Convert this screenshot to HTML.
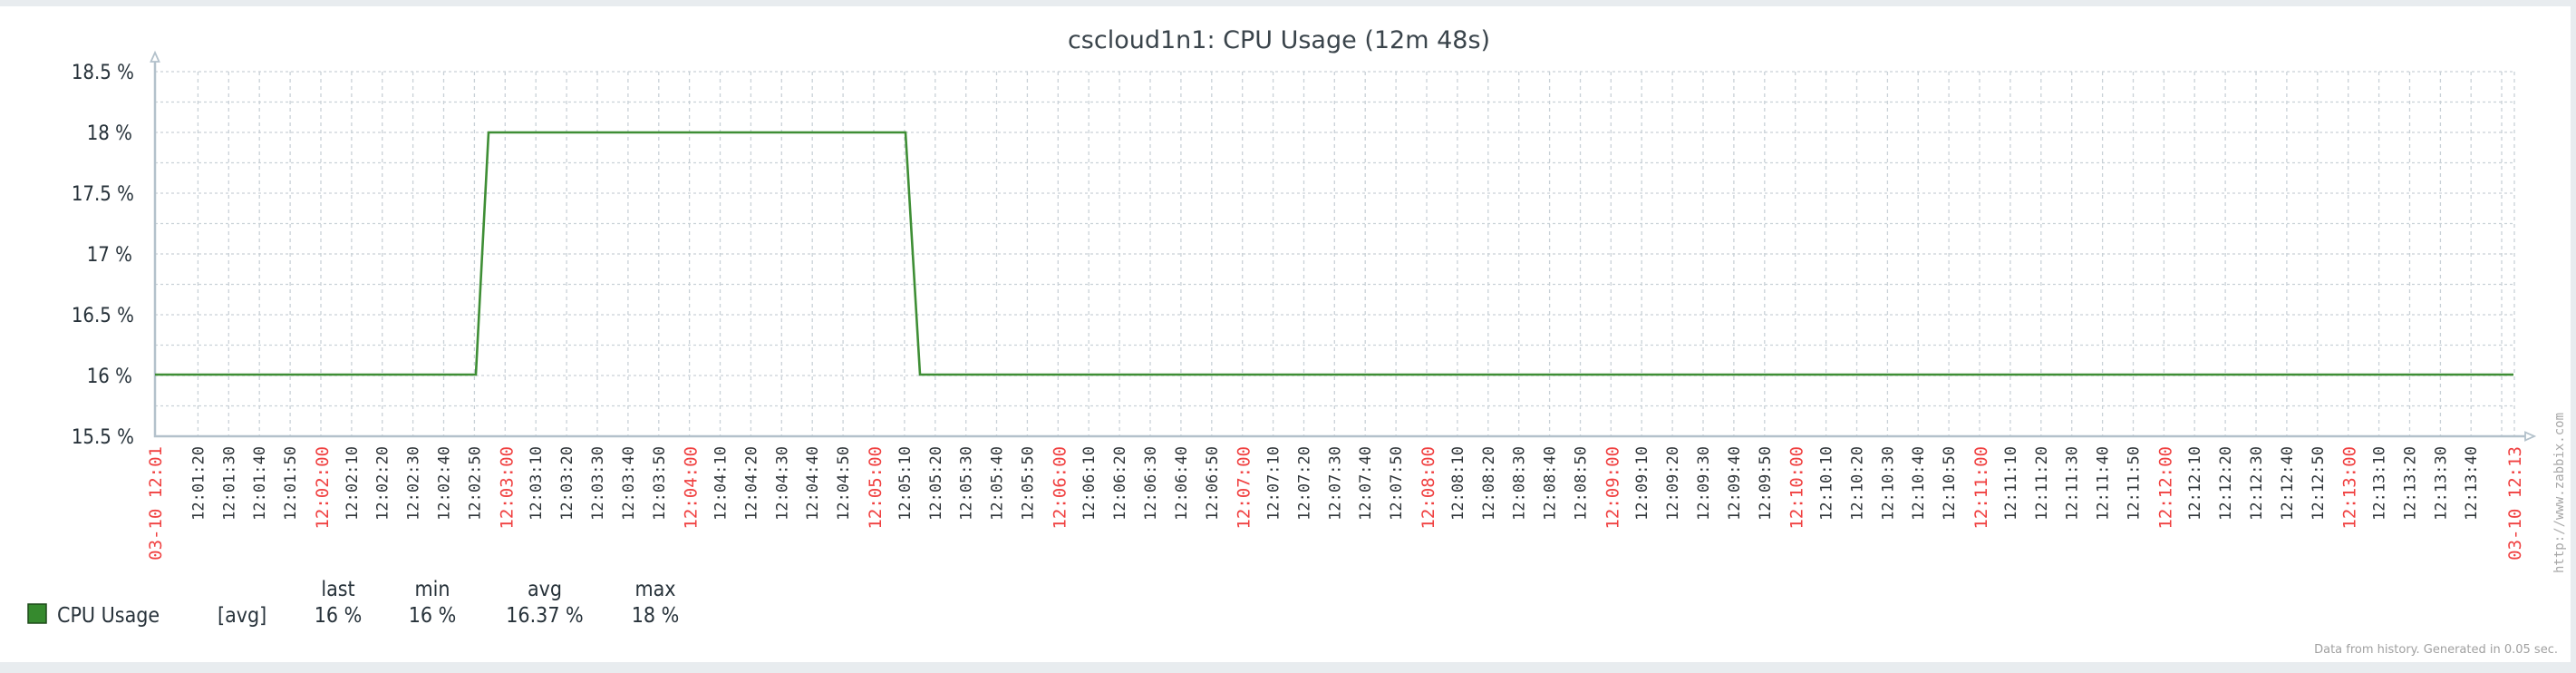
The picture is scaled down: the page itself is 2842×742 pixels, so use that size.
<!DOCTYPE html>
<html><head><meta charset="utf-8"><style>
html,body{margin:0;padding:0;background:#fff;}
body{width:2842px;height:742px;overflow:hidden;position:relative;}
svg{position:absolute;left:0;top:0;}
.yl{font-family:"DejaVu Sans Condensed","DejaVu Sans","Liberation Sans",sans-serif;font-size:22px;fill:#27323a;text-anchor:end;}
.xl{font-family:"DejaVu Sans Mono","Liberation Mono",monospace;font-size:17px;fill:#30363a;text-anchor:end;}
.xr{font-family:"DejaVu Sans Mono","Liberation Mono",monospace;font-size:19px;fill:#f04040;text-anchor:end;}
.lg{font-family:"DejaVu Sans Condensed","DejaVu Sans","Liberation Sans",sans-serif;font-size:23px;fill:#27323a;}
</style></head><body>
<svg width="2842" height="742" viewBox="0 0 2842 742">
<rect x="0" y="0" width="2842" height="7" fill="#e8ecef"/>
<rect x="2836" y="0" width="6" height="742" fill="#e8ecef"/>
<rect x="0" y="730" width="2842" height="12" fill="#e8ecef"/>
<text x="1411" y="53" text-anchor="middle" font-family="'DejaVu Sans','Liberation Sans',sans-serif" font-size="27" fill="#3a444b">cscloud1n1: CPU Usage (12m 48s)</text>
<g stroke="#c9d1d7" stroke-width="1.3" stroke-dasharray="3,3">
<path d="M171 79H2774M171 112.5H2774M171 146H2774M171 179.5H2774M171 213H2774M171 246.5H2774M171 280H2774M171 313.5H2774M171 347H2774M171 380.5H2774M171 414H2774M171 447.5H2774"/>
</g>
<g stroke="#c9d1d7" stroke-width="1.3" stroke-dasharray="4,4">
<path d="M218.4 79V481M252.3 79V481M286.2 79V481M320.1 79V481M354 79V481M387.9 79V481M421.7 79V481M455.6 79V481M489.5 79V481M523.4 79V481M557.3 79V481M591.2 79V481M625.1 79V481M659 79V481M692.9 79V481M726.8 79V481M760.6 79V481M794.5 79V481M828.4 79V481M862.3 79V481M896.2 79V481M930.1 79V481M964 79V481M997.9 79V481M1031.8 79V481M1065.7 79V481M1099.5 79V481M1133.4 79V481M1167.3 79V481M1201.2 79V481M1235.1 79V481M1269 79V481M1302.9 79V481M1336.8 79V481M1370.7 79V481M1404.6 79V481M1438.5 79V481M1472.3 79V481M1506.2 79V481M1540.1 79V481M1574 79V481M1607.9 79V481M1641.8 79V481M1675.7 79V481M1709.6 79V481M1743.5 79V481M1777.3 79V481M1811.2 79V481M1845.1 79V481M1879 79V481M1912.9 79V481M1946.8 79V481M1980.7 79V481M2014.6 79V481M2048.5 79V481M2082.4 79V481M2116.2 79V481M2150.1 79V481M2184 79V481M2217.9 79V481M2251.8 79V481M2285.7 79V481M2319.6 79V481M2353.5 79V481M2387.4 79V481M2421.2 79V481M2455.1 79V481M2489 79V481M2522.9 79V481M2556.8 79V481M2590.7 79V481M2624.6 79V481M2658.5 79V481M2692.4 79V481M2726.2 79V481M2760 79V481M2774 79V481"/>
</g>
<g stroke="#b3c1cb" stroke-width="2.5" fill="none">
<path d="M171 68V481H2786"/>
<path d="M171 58L166.5 68H175.5Z" fill="#fff" stroke-width="1.8"/>
<path d="M2796 481L2786 476.5V485.5Z" fill="#fff" stroke-width="1.8"/>
</g>
<path d="M171 413H525L539 146H999L1015 413H2773" fill="none" stroke="#3e8e35" stroke-width="2.6"/>
<text class="yl" x="148" y="87">18.5 %</text>
<text class="yl" x="146" y="154">18 %</text>
<text class="yl" x="148" y="221">17.5 %</text>
<text class="yl" x="146" y="288">17 %</text>
<text class="yl" x="148" y="355">16.5 %</text>
<text class="yl" x="146" y="422">16 %</text>
<text class="yl" x="148" y="489">15.5 %</text>
<g>
<text class="xr" transform="translate(178,492) rotate(-90)">03-10 12:01</text>
<text class="xl" transform="translate(224.4,492) rotate(-90)">12:01:20</text>
<text class="xl" transform="translate(258.3,492) rotate(-90)">12:01:30</text>
<text class="xl" transform="translate(292.2,492) rotate(-90)">12:01:40</text>
<text class="xl" transform="translate(326.1,492) rotate(-90)">12:01:50</text>
<text class="xr" transform="translate(362,492) rotate(-90)">12:02:00</text>
<text class="xl" transform="translate(393.9,492) rotate(-90)">12:02:10</text>
<text class="xl" transform="translate(427.7,492) rotate(-90)">12:02:20</text>
<text class="xl" transform="translate(461.6,492) rotate(-90)">12:02:30</text>
<text class="xl" transform="translate(495.5,492) rotate(-90)">12:02:40</text>
<text class="xl" transform="translate(529.4,492) rotate(-90)">12:02:50</text>
<text class="xr" transform="translate(565.3,492) rotate(-90)">12:03:00</text>
<text class="xl" transform="translate(597.2,492) rotate(-90)">12:03:10</text>
<text class="xl" transform="translate(631.1,492) rotate(-90)">12:03:20</text>
<text class="xl" transform="translate(665,492) rotate(-90)">12:03:30</text>
<text class="xl" transform="translate(698.9,492) rotate(-90)">12:03:40</text>
<text class="xl" transform="translate(732.8,492) rotate(-90)">12:03:50</text>
<text class="xr" transform="translate(768.6,492) rotate(-90)">12:04:00</text>
<text class="xl" transform="translate(800.5,492) rotate(-90)">12:04:10</text>
<text class="xl" transform="translate(834.4,492) rotate(-90)">12:04:20</text>
<text class="xl" transform="translate(868.3,492) rotate(-90)">12:04:30</text>
<text class="xl" transform="translate(902.2,492) rotate(-90)">12:04:40</text>
<text class="xl" transform="translate(936.1,492) rotate(-90)">12:04:50</text>
<text class="xr" transform="translate(972,492) rotate(-90)">12:05:00</text>
<text class="xl" transform="translate(1003.9,492) rotate(-90)">12:05:10</text>
<text class="xl" transform="translate(1037.8,492) rotate(-90)">12:05:20</text>
<text class="xl" transform="translate(1071.7,492) rotate(-90)">12:05:30</text>
<text class="xl" transform="translate(1105.5,492) rotate(-90)">12:05:40</text>
<text class="xl" transform="translate(1139.4,492) rotate(-90)">12:05:50</text>
<text class="xr" transform="translate(1175.3,492) rotate(-90)">12:06:00</text>
<text class="xl" transform="translate(1207.2,492) rotate(-90)">12:06:10</text>
<text class="xl" transform="translate(1241.1,492) rotate(-90)">12:06:20</text>
<text class="xl" transform="translate(1275,492) rotate(-90)">12:06:30</text>
<text class="xl" transform="translate(1308.9,492) rotate(-90)">12:06:40</text>
<text class="xl" transform="translate(1342.8,492) rotate(-90)">12:06:50</text>
<text class="xr" transform="translate(1378.7,492) rotate(-90)">12:07:00</text>
<text class="xl" transform="translate(1410.6,492) rotate(-90)">12:07:10</text>
<text class="xl" transform="translate(1444.5,492) rotate(-90)">12:07:20</text>
<text class="xl" transform="translate(1478.3,492) rotate(-90)">12:07:30</text>
<text class="xl" transform="translate(1512.2,492) rotate(-90)">12:07:40</text>
<text class="xl" transform="translate(1546.1,492) rotate(-90)">12:07:50</text>
<text class="xr" transform="translate(1582,492) rotate(-90)">12:08:00</text>
<text class="xl" transform="translate(1613.9,492) rotate(-90)">12:08:10</text>
<text class="xl" transform="translate(1647.8,492) rotate(-90)">12:08:20</text>
<text class="xl" transform="translate(1681.7,492) rotate(-90)">12:08:30</text>
<text class="xl" transform="translate(1715.6,492) rotate(-90)">12:08:40</text>
<text class="xl" transform="translate(1749.5,492) rotate(-90)">12:08:50</text>
<text class="xr" transform="translate(1785.3,492) rotate(-90)">12:09:00</text>
<text class="xl" transform="translate(1817.2,492) rotate(-90)">12:09:10</text>
<text class="xl" transform="translate(1851.1,492) rotate(-90)">12:09:20</text>
<text class="xl" transform="translate(1885,492) rotate(-90)">12:09:30</text>
<text class="xl" transform="translate(1918.9,492) rotate(-90)">12:09:40</text>
<text class="xl" transform="translate(1952.8,492) rotate(-90)">12:09:50</text>
<text class="xr" transform="translate(1988.7,492) rotate(-90)">12:10:00</text>
<text class="xl" transform="translate(2020.6,492) rotate(-90)">12:10:10</text>
<text class="xl" transform="translate(2054.5,492) rotate(-90)">12:10:20</text>
<text class="xl" transform="translate(2088.4,492) rotate(-90)">12:10:30</text>
<text class="xl" transform="translate(2122.2,492) rotate(-90)">12:10:40</text>
<text class="xl" transform="translate(2156.1,492) rotate(-90)">12:10:50</text>
<text class="xr" transform="translate(2192,492) rotate(-90)">12:11:00</text>
<text class="xl" transform="translate(2223.9,492) rotate(-90)">12:11:10</text>
<text class="xl" transform="translate(2257.8,492) rotate(-90)">12:11:20</text>
<text class="xl" transform="translate(2291.7,492) rotate(-90)">12:11:30</text>
<text class="xl" transform="translate(2325.6,492) rotate(-90)">12:11:40</text>
<text class="xl" transform="translate(2359.5,492) rotate(-90)">12:11:50</text>
<text class="xr" transform="translate(2395.4,492) rotate(-90)">12:12:00</text>
<text class="xl" transform="translate(2427.2,492) rotate(-90)">12:12:10</text>
<text class="xl" transform="translate(2461.1,492) rotate(-90)">12:12:20</text>
<text class="xl" transform="translate(2495,492) rotate(-90)">12:12:30</text>
<text class="xl" transform="translate(2528.9,492) rotate(-90)">12:12:40</text>
<text class="xl" transform="translate(2562.8,492) rotate(-90)">12:12:50</text>
<text class="xr" transform="translate(2598.7,492) rotate(-90)">12:13:00</text>
<text class="xl" transform="translate(2630.6,492) rotate(-90)">12:13:10</text>
<text class="xl" transform="translate(2664.5,492) rotate(-90)">12:13:20</text>
<text class="xl" transform="translate(2698.4,492) rotate(-90)">12:13:30</text>
<text class="xl" transform="translate(2732.2,492) rotate(-90)">12:13:40</text>
<text class="xr" transform="translate(2781,492) rotate(-90)">03-10 12:13</text>
</g>
<text transform="translate(2828,632) rotate(-90)" font-family="'DejaVu Sans Mono','Liberation Mono',monospace" font-size="14" fill="#a8a8a8">http://www.zabbix.com</text>
<rect x="31" y="666" width="20" height="21" fill="#368a2e" stroke="#1f4a1a" stroke-width="1.5"/>
<text class="lg" x="63" y="686">CPU Usage</text>
<text class="lg" x="240" y="686">[avg]</text>
<text class="lg" x="373" y="657" text-anchor="middle">last</text>
<text class="lg" x="477" y="657" text-anchor="middle">min</text>
<text class="lg" x="601" y="657" text-anchor="middle">avg</text>
<text class="lg" x="723" y="657" text-anchor="middle">max</text>
<text class="lg" x="373" y="686" text-anchor="middle">16 %</text>
<text class="lg" x="477" y="686" text-anchor="middle">16 %</text>
<text class="lg" x="601" y="686" text-anchor="middle">16.37 %</text>
<text class="lg" x="723" y="686" text-anchor="middle">18 %</text>
<text x="2822" y="720" text-anchor="end" font-family="'DejaVu Sans','Liberation Sans',sans-serif" font-size="13" fill="#a0a0a0">Data from history. Generated in 0.05 sec.</text>
</svg>
</body></html>
